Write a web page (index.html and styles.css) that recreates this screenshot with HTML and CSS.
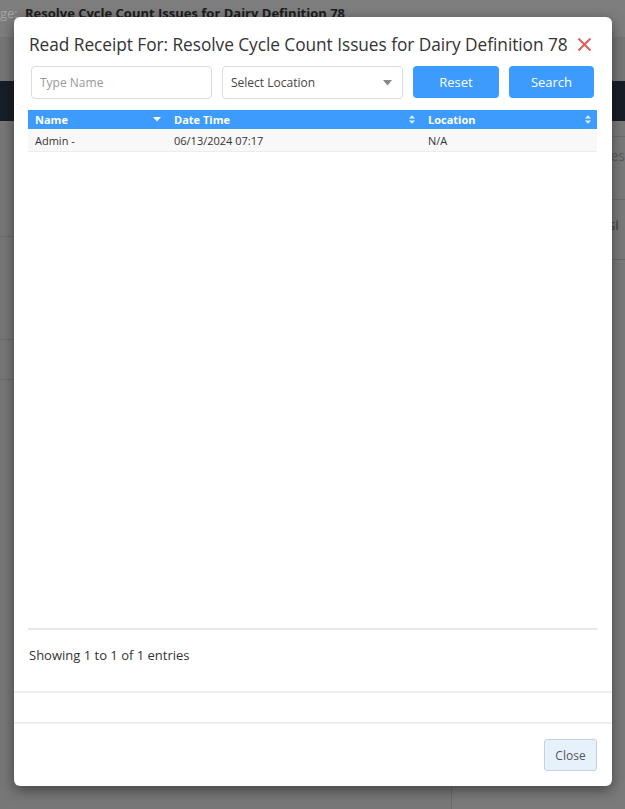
FILE: index.html
```html
<!DOCTYPE html>
<html>
<head>
<meta charset="utf-8">
<link rel="stylesheet" href="styles.css">
</head>
<body>
<div class="page">
  <div class="topbar"><span class="lbl">ge:</span><span class="ttl">Resolve Cycle Count Issues for Dairy Definition 78</span></div>
  <div class="subbar"></div>
  <div class="navbar"></div>
  <div class="main">
    <div class="leftcol">
      <div class="lrow r1"></div>
      <div class="lrow r2"></div>
      <div class="lrow r3"></div>
    </div>
    <div class="rightcol">
      <div class="rrow q1"></div>
      <div class="rrow q2"><span>nes</span></div>
      <div class="rrow q3"><span>ssi</span></div>
    </div>
  </div>
</div>

<div class="modal">
  <div class="modal-header">
    <h4 class="modal-title">Read Receipt For: Resolve Cycle Count Issues for Dairy Definition 78</h4>
    <svg class="x" width="15" height="15" viewBox="0 0 15 15"><path d="M1.5 1.5 L13.5 13.5 M13.5 1.5 L1.5 13.5" stroke="#e0605a" stroke-width="2" fill="none"/></svg>
  </div>
  <div class="filters">
    <div class="input placeholder">Type Name</div>
    <div class="input select"><span>Select Location</span><svg width="9" height="6" viewBox="0 0 9 6"><path d="M0 0 H9 L4.5 5.5 Z" fill="#888"/></svg></div>
    <button class="btn reset">Reset</button>
    <button class="btn search">Search</button>
  </div>
  <div class="tablewrap">
    <table class="grid">
      <thead>
        <tr>
          <th class="c1"><span>Name</span><svg width="8" height="5" viewBox="0 0 8 5"><path d="M0 0 H8 L4 4.5 Z" fill="#fff"/></svg></th>
          <th class="c2"><span>Date Time</span><svg width="6" height="9" viewBox="0 0 6 9"><path d="M0 3.6 L3 0.2 L6 3.6 Z M0 5.4 L3 8.8 L6 5.4 Z" fill="#e6f1ff"/></svg></th>
          <th class="c3"><span>Location</span><svg width="6" height="9" viewBox="0 0 6 9"><path d="M0 3.6 L3 0.2 L6 3.6 Z M0 5.4 L3 8.8 L6 5.4 Z" fill="#e6f1ff"/></svg></th>
        </tr>
      </thead>
      <tbody>
        <tr>
          <td>Admin -</td>
          <td>06/13/2024 07:17</td>
          <td>N/A</td>
        </tr>
      </tbody>
    </table>
  </div>
  <div class="info">Showing 1 to 1 of 1 entries</div>
  <div class="spacer"></div>
  <div class="modal-footer">
    <button class="closebtn">Close</button>
  </div>
</div>
</body>
</html>
```
FILE: styles.css
```css
html, body {
  margin: 0;
  padding: 0;
}
body {
  width: 625px;
  height: 809px;
  overflow: hidden;
  background: #777777;
  font-family: "Open Sans", "Liberation Sans", sans-serif;
  position: relative;
}
.page {
  display: flex;
  flex-direction: column;
  height: 809px;
}
.topbar {
  height: 37px;
  background: #7e7e7e;
  display: flex;
  align-items: center;
  padding-bottom: 12px;
  box-sizing: border-box;
  font-size: 13px;
  white-space: nowrap;
}
.topbar .lbl {
  color: #a5a5a5;
  width: 25px;
}
.topbar .ttl {
  color: #1c1c1c;
  font-weight: 700;
}
.subbar {
  height: 44px;
  background: #767676;
}
.navbar {
  height: 40px;
  background: #181e27;
}
.main {
  flex: 1;
  display: flex;
}
.leftcol {
  width: 451px;
  background: #777;
}
.lrow {
  border-bottom: 1px solid #6a6a6a;
}
.r1 { height: 115px; }
.r2 { height: 102px; }
.r3 { height: 39px; }
.rightcol {
  flex: 1;
  border-left: 1px solid #6c6c6c;
  background: #7a7a7a;
}
.rrow {
  border-bottom: 1px solid #6c6c6c;
  font-size: 14px;
  line-height: 20px;
  color: #3a3a3a;
  display: flex;
  align-items: flex-start;
  padding-left: 150px;
  white-space: nowrap;
  box-sizing: border-box;
}
.q1 { height: 16px; }
.q2 { height: 63px; color: #5a5a5a; padding-top: 9px; }
.q3 { height: 60px; padding-top: 15px; }

.modal {
  position: absolute;
  left: 14px;
  top: 17px;
  width: 598px;
  height: 769px;
  background: #fff;
  border-radius: 6px;
  box-shadow: 0 4px 14px rgba(0,0,0,0.45);
  display: flex;
  flex-direction: column;
  box-sizing: border-box;
}
.modal-header {
  height: 49px;
  display: flex;
  align-items: center;
  padding: 5px 20px 0 15px;
  box-sizing: border-box;
}
.modal-title {
  margin: 0;
  flex: 1;
  font-weight: 400;
  font-size: 17.3px;
  letter-spacing: -0.05px;
  color: #333;
  white-space: nowrap;
}
.x {
  display: block;
  flex-shrink: 0;
}
.filters {
  display: flex;
  padding: 0 17px 0 17px;
  gap: 10px;
  height: 33px;
}
.input {
  width: 181px;
  height: 33px;
  flex-shrink: 0;
  box-sizing: border-box;
  border: 1px solid #dcdcdc;
  border-radius: 4px;
  font-size: 12px;
  display: flex;
  align-items: center;
  padding: 0 8px;
}
.placeholder {
  color: #999;
}
.select {
  color: #444;
  justify-content: space-between;
  padding-right: 10px;
}
.btn {
  height: 32px;
  flex-shrink: 0;
  border: none;
  border-radius: 4px;
  background: #3d9bfd;
  color: #fff;
  font-family: "Open Sans", "Liberation Sans", sans-serif;
  font-size: 13px;
  padding: 0;
}
.reset { width: 86px; }
.search { width: 85px; }
.tablewrap {
  margin: 11px 15px 0 14px;
  flex: 1;
  border-bottom: 2px solid #e8e8e8;
}
.grid {
  width: 569px;
  border-collapse: collapse;
  font-size: 11px;
}
.grid th {
  background: #3d9bfd;
  color: #fff;
  font-weight: 700;
  text-align: left;
  height: 19px;
  padding: 0 6px 0 7px;
  box-sizing: border-box;
}
.grid th span {
  float: left;
  line-height: 19px;
}
.grid th svg {
  float: right;
  margin-top: 7px;
}
.grid th.c2 svg, .grid th.c3 svg {
  margin-top: 5px;
}
.c1 { width: 139px; }
.c2 { width: 254px; }
.grid td {
  background: #f8f8f8;
  color: #333;
  height: 22px;
  padding: 0 7px;
  border-top: 1px solid #fff;
  border-bottom: 1px solid #ececec;
  box-sizing: border-box;
}
.info {
  padding: 16px 0 0 15px;
  height: 45px;
  font-size: 13px;
  line-height: 18px;
  color: #333;
  border-bottom: 2px solid #eeeeee;
}
.spacer {
  height: 29px;
  border-bottom: 2px solid #eeeeee;
}
.modal-footer {
  height: 62px;
  display: flex;
  justify-content: flex-end;
  align-items: flex-start;
  padding: 15px 15px 0 0;
  box-sizing: border-box;
}
.closebtn {
  width: 53px;
  height: 32px;
  background: #e7f1fc;
  border: 1px solid #c3d2e0;
  border-radius: 3px;
  color: #555;
  font-family: "Open Sans", "Liberation Sans", sans-serif;
  font-size: 12px;
  padding: 0;
}
```
